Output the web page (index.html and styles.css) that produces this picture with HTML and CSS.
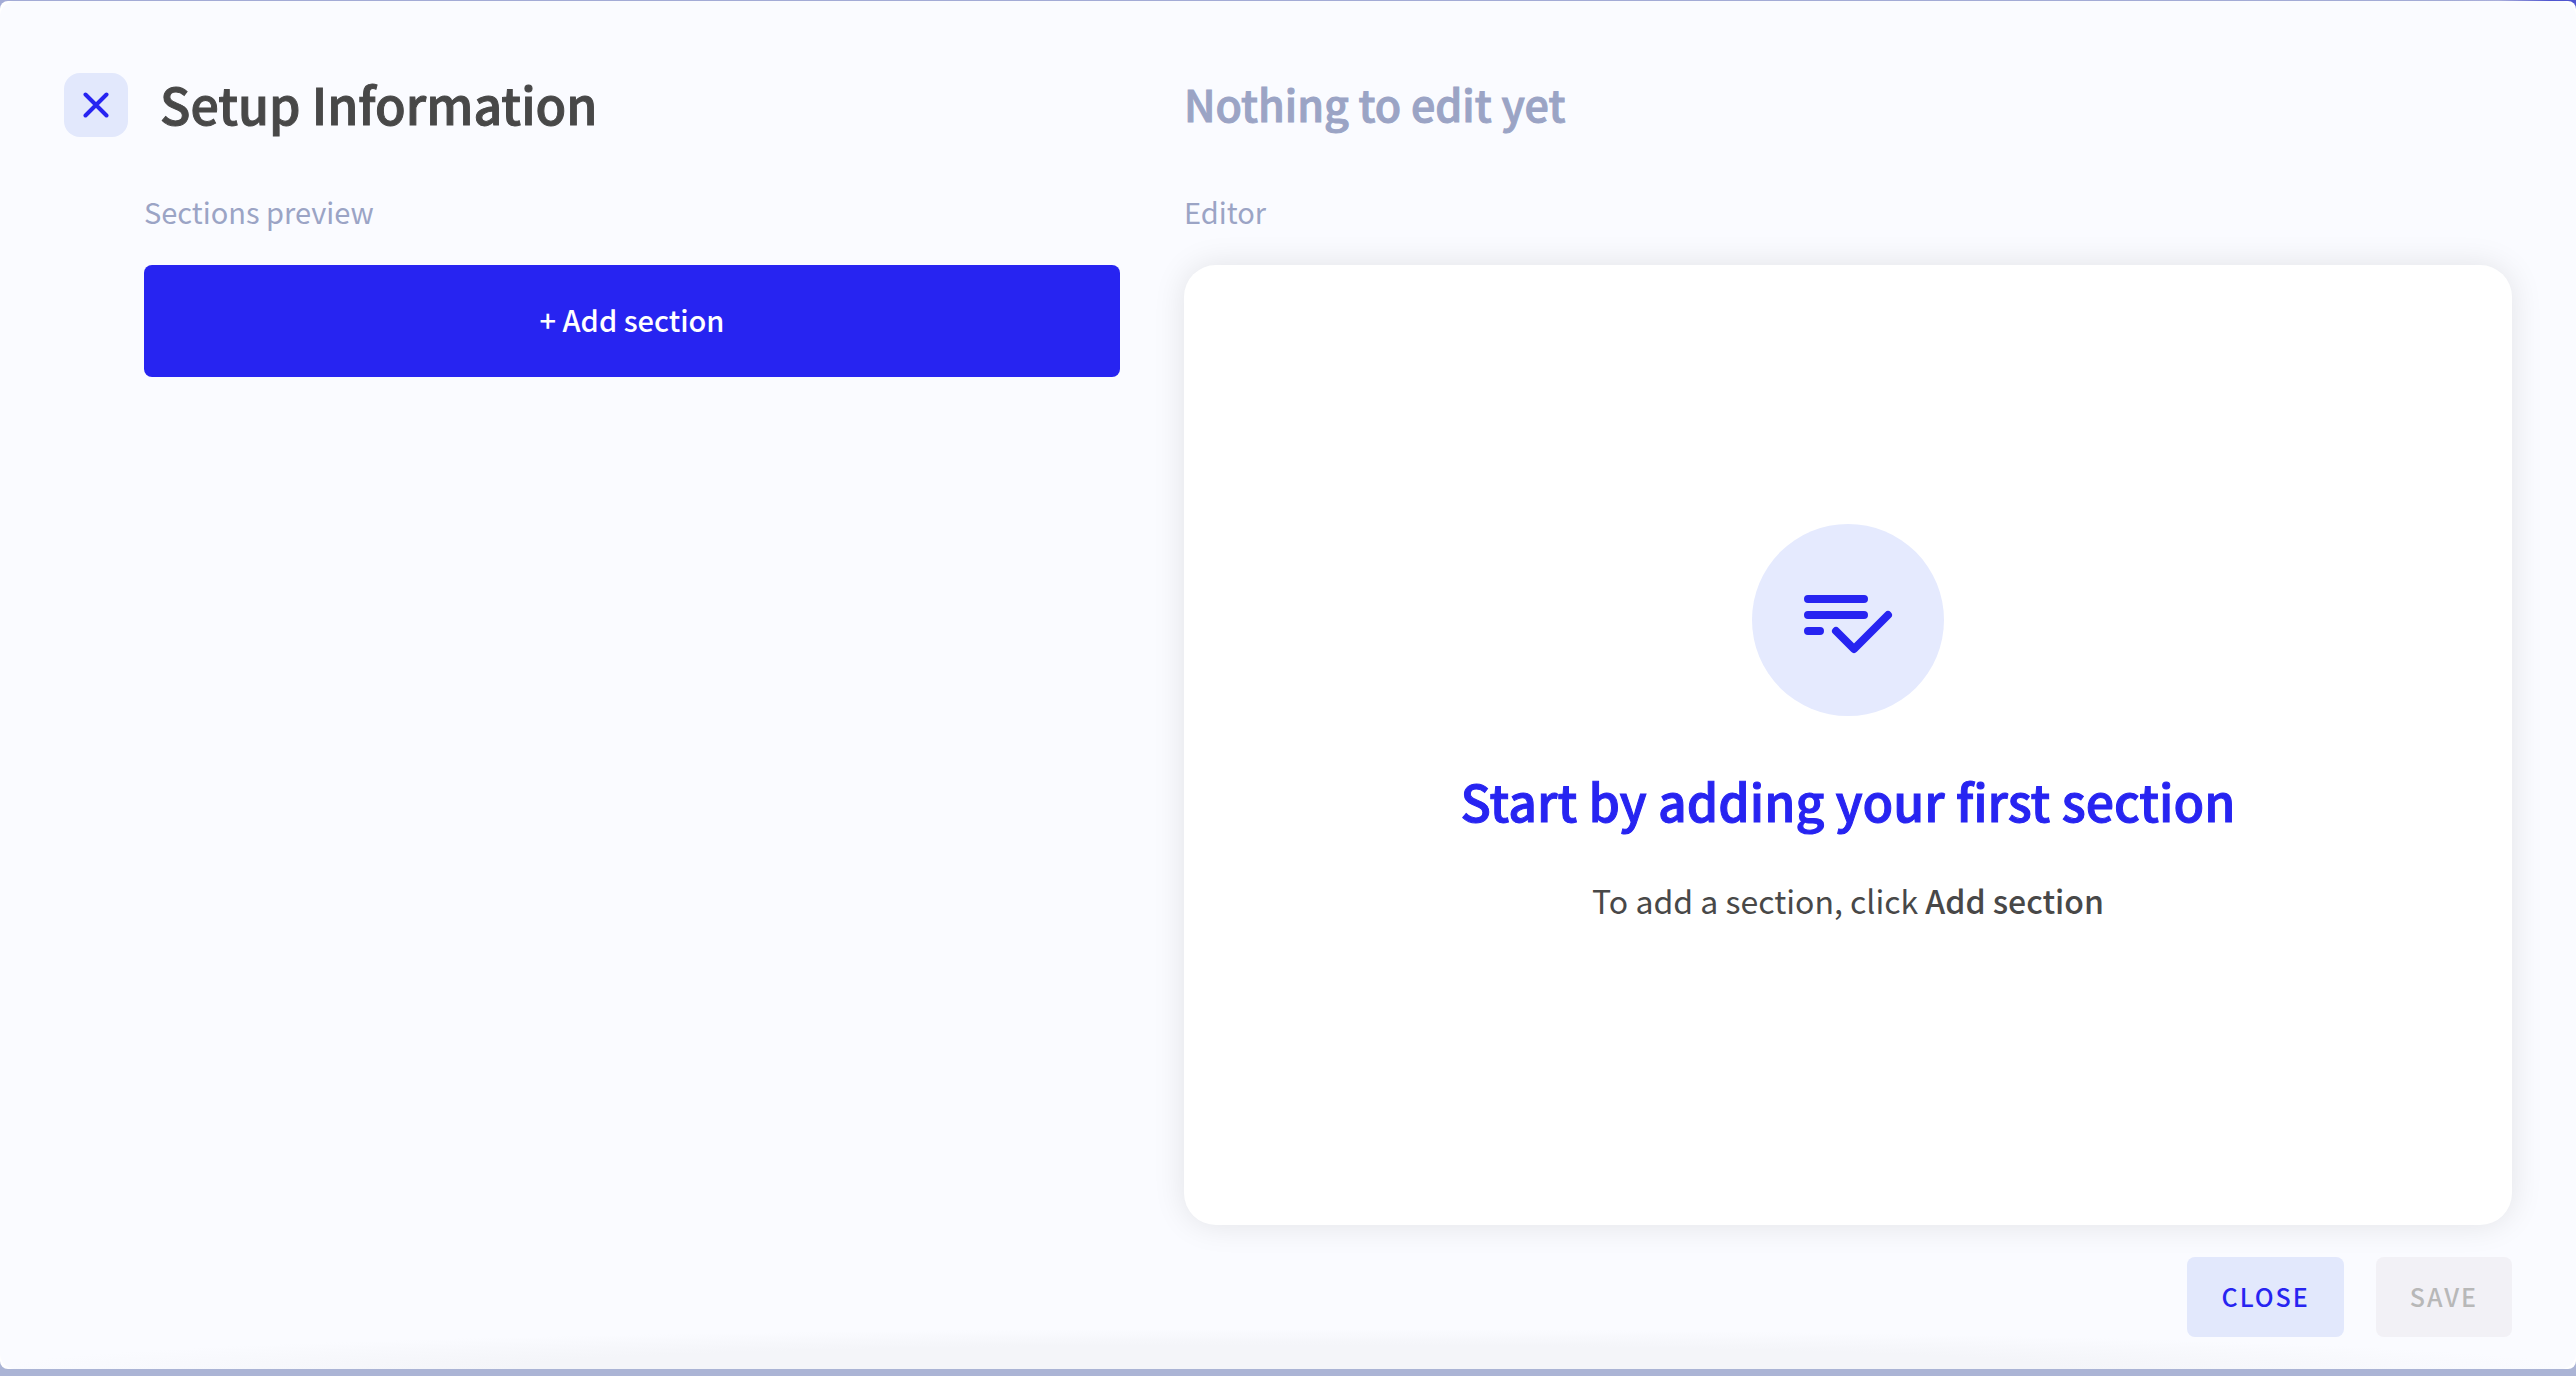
FILE: index.html
```html
<!DOCTYPE html>
<html lang="en">
<head>
  <meta charset="UTF-8" />
  <meta name="viewport" content="width=device-width, initial-scale=1.0"/>
  <title>Setup Information</title>
  <link rel="stylesheet" href="styles.css">
</head>
<body>

  <div class="dialog" role="dialog" aria-labelledby="dialogTitle">
    <div class="panel">

      <section class="sections">
        <header class="header">
          <button class="icon-btn" type="button" aria-label="Close">
            <svg width="26" height="26" viewBox="0 0 26 26" fill="none" stroke="currentColor" stroke-width="4" stroke-linecap="round">
              <path d="M2.5 2.5L23.5 23.5M23.5 2.5L2.5 23.5"/>
            </svg>
          </button>
          <h1 id="dialogTitle">Setup Information</h1>
        </header>
        <div class="preview">
          <p class="label">Sections preview</p>
          <button class="add-btn" type="button">+ Add section</button>
        </div>
      </section>

      <section class="editor">
        <header class="header">
          <h2>Nothing to edit yet</h2>
        </header>
        <p class="label">Editor</p>
        <div class="card">
          <div class="circle">
            <svg width="96" height="96" viewBox="0 0 96 96" fill="none" stroke="currentColor" stroke-width="8" stroke-linecap="round" stroke-linejoin="round">
              <path d="M8 27H64M8 43H64M8 59H20"/>
              <path d="M36 59L54 77L88 43"/>
            </svg>
          </div>
          <h3>Start by adding your first section</h3>
          <p class="hint">To add a section, click <strong>Add section</strong></p>
        </div>
        <footer class="actions">
          <button class="btn" type="button">CLOSE</button>
          <button class="btn" type="button" disabled>SAVE</button>
        </footer>
      </section>

    </div>
  </div>

</body>
</html>
```

FILE: styles.css
```css
* { margin: 0; padding: 0; box-sizing: border-box; }
body {
  font-family: "Source Sans Pro", "Noto Sans CJK JP", sans-serif;
  background: linear-gradient(to right, #a3abd6 95%, #a9aedb 97%, #4f55d0 99%) top / 100% 24px no-repeat, #abb4d5;
  color: #484848;
  min-height: 100vh;
  padding: 1px 0 7px;
  display: flex;
}
h1, h2, h3, strong { font-weight: 500; }
/* a touch heavier than medium, bold is too much */
h1, h2, h3 { -webkit-text-stroke: 1px currentColor; }
button {
  font-family: inherit;
  font-weight: 500;
  border: none;
  cursor: pointer;
}
.dialog {
  flex: 1;
  display: flex;
  background: #fff;
  border-radius: 8px;
  overflow: hidden;
}
.panel {
  flex: 1;
  display: grid;
  grid-template-columns: 1056fr 1328fr;
  gap: 64px;
  padding: 64px 64px 32px;
  background: radial-gradient(ellipse 50% 40px at 50% 100%, #f4f5f9 60%, #fafbff) #fafbff;
  border-radius: 16px;
}
.header {
  display: flex;
  align-items: center;
  gap: 32px;
  height: 80px;
}
.icon-btn {
  width: 64px;
  height: 64px;
  display: flex;
  align-items: center;
  justify-content: center;
  border-radius: 16px;
  background: #e2e8fc;
  color: #2724f1;
}
h1 { font-size: 50px; line-height: 64px; padding-bottom: 4px; }
h2 { font-size: 43px; line-height: 64px; padding-bottom: 4px; color: #9ba4c5; }
.preview { padding-left: 80px; }
.label {
  font-size: 29px;
  line-height: 40px;
  margin: 46px 0 34px;
  color: #9ba4c5;
}
.add-btn {
  width: 100%;
  height: 112px;
  padding-bottom: 4px;
  border-radius: 8px;
  background: #2724f1;
  color: #fff;
  font-size: 29px;
}
.editor {
  display: flex;
  flex-direction: column;
}
.card {
  flex: 1;
  display: flex;
  flex-direction: column;
  align-items: center;
  justify-content: center;
  padding-bottom: 42px;
  background: #fff;
  border-radius: 32px;
  box-shadow: 0 0 32px rgba(0, 0, 0, 0.1);
}
.circle {
  width: 192px;
  height: 192px;
  display: flex;
  align-items: center;
  justify-content: center;
  margin-bottom: 48px;
  border-radius: 50%;
  background: #e5eafe;
  color: #2724f1;
}
h3 {
  font-size: 50px;
  line-height: 72px;
  margin-bottom: 40px;
  color: #2724f1;
}
.hint { font-size: 32px; line-height: 48px; }
.actions {
  display: flex;
  justify-content: flex-end;
  gap: 32px;
  margin-top: 32px;
}
.btn {
  height: 80px;
  padding: 0 34px 2px;
  border-radius: 8px;
  background: #e2e8fc;
  color: #2724f1;
  font-size: 25px;
  letter-spacing: 2px;
}
.btn:disabled {
  background: #f2f1f6;
  color: #b8b8b8;
  cursor: default;
}
```
